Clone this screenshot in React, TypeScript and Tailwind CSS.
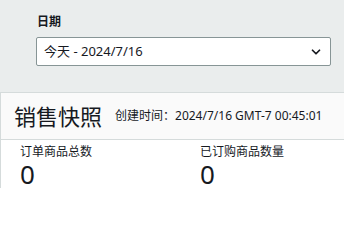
import { ChevronDown } from 'lucide-react';

const font = { fontFamily: '"Noto Sans", "Noto Sans CJK SC", sans-serif' };

export default function App() {
  return (
    <div className="w-[344px] h-[202px] overflow-hidden bg-white text-[#16191f]" style={font}>
      {/* Filter bar */}
      <div className="bg-[#eaeded] h-[92px] pl-[36px] pr-[13px] pt-[13px]">
        <div className="text-[12px] font-bold leading-[18px] pl-[1px]">日期</div>
        <div className="mt-[6px] h-[29px] bg-white border border-[#879596] rounded-[2px] flex items-center justify-between pl-[7px] pr-[7px]">
          <span className="text-[13px] leading-none">今天 - 2024/7/16</span>
          <ChevronDown className="w-[14px] h-[14px]" strokeWidth={3} />
        </div>
      </div>

      {/* Snapshot panel */}
      <div className="border-t border-l border-[#d5dbdb]">
        <div className="h-[47px] bg-[#fafafa] border-b border-[#d5dbdb] flex items-center pl-[13px] gap-[13px]">
          <span className="text-[22px] leading-none">销售快照</span>
          <span className="text-[12px] leading-none">创建时间：2024/7/16 GMT-7 00:45:01</span>
        </div>
        <div className="grid grid-cols-[180px_1fr] pl-[19px] pt-[4px]">
          <div>
            <div className="text-[12px] leading-[16px]">订单商品总数</div>
            <div className="text-[26px] leading-[28px]">0</div>
          </div>
          <div>
            <div className="text-[12px] leading-[16px]">已订购商品数量</div>
            <div className="text-[26px] leading-[28px]">0</div>
          </div>
        </div>
      </div>
    </div>
  );
}
